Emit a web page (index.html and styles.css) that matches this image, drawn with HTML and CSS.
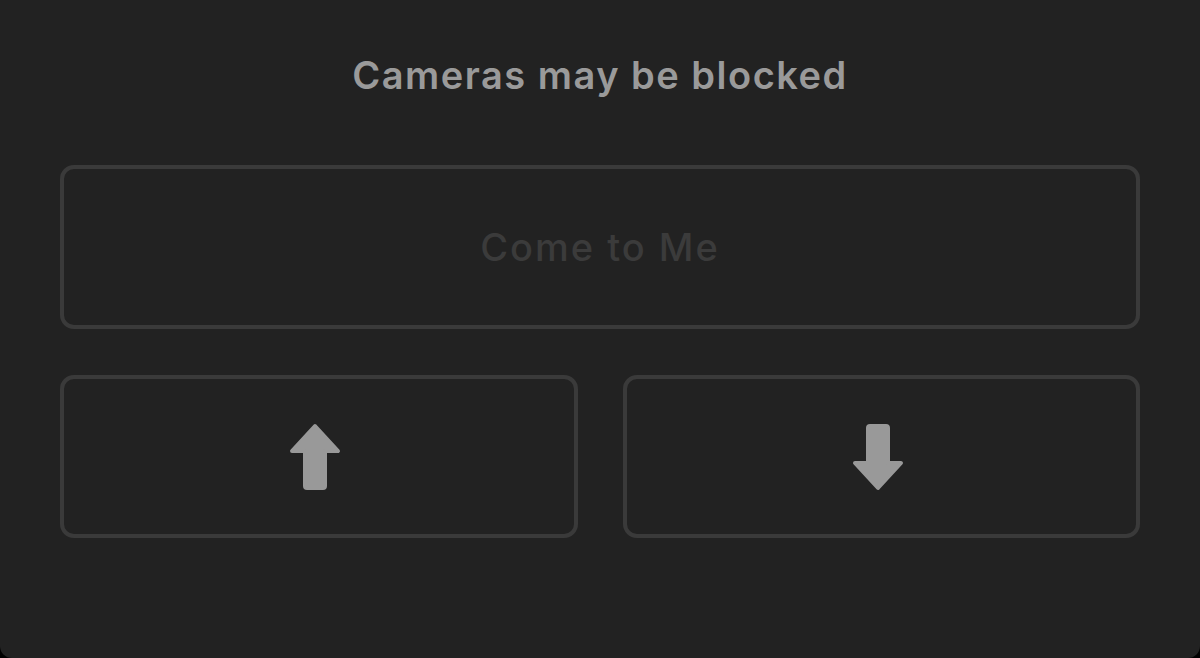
FILE: index.html
```html
<!DOCTYPE html>
<html>
<head>
<meta charset="utf-8">
<link rel="stylesheet" href="styles.css">
</head>
<body>
<div class="panel">
  <h1 class="title">Cameras may be blocked</h1>
  <div class="btn btn-wide"><span class="btn-label">Come to Me</span></div>
  <div class="row">
    <div class="btn btn-half">
      <svg class="arrow arrow-up" width="54" height="68" viewBox="0 0 54 68">
        <path d="M27 3 L50 28 L37 28 L37 63 Q37 65 35 65 L19 65 Q17 65 17 63 L17 28 L4 28 Z" fill="#999" stroke="#999" stroke-width="4" stroke-linejoin="round"/>
      </svg>
    </div>
    <div class="btn btn-half">
      <svg class="arrow arrow-down" width="54" height="68" viewBox="0 0 54 68">
        <path d="M27 65 L50 40 L37 40 L37 5 Q37 3 35 3 L19 3 Q17 3 17 5 L17 40 L4 40 Z" fill="#999" stroke="#999" stroke-width="4" stroke-linejoin="round"/>
      </svg>
    </div>
  </div>
</div>
</body>
</html>
```

FILE: styles.css
```css
html {
  background: #000;
}
body {
  margin: 0;
  font-family: Inter, "Liberation Sans", sans-serif;
}
.panel {
  width: 1200px;
  height: 658px;
  box-sizing: border-box;
  background: #222222;
  border-radius: 0 0 12px 12px;
  padding: 50px 60px 0;
}
.title {
  margin: 0;
  height: 50px;
  line-height: 50px;
  text-align: center;
  font-size: 38px;
  font-weight: 600;
  color: #9a9a9a;
  letter-spacing: 1.5px;
}
.btn {
  box-sizing: border-box;
  border: 4px solid #3a3a3a;
  border-radius: 14px;
  display: flex;
  align-items: center;
  justify-content: center;
}
.btn-wide {
  margin-top: 65px;
  height: 164px;
}
.btn-label {
  font-size: 38px;
  font-weight: 500;
  color: #3b3b3b;
  letter-spacing: 2px;
}
.row {
  margin-top: 46px;
  display: flex;
  gap: 45px;
}
.btn-half {
  flex: 1;
  height: 163px;
}
.arrow-up {
  margin-left: -8px;
}
.arrow-down {
  margin-left: -6px;
}
```
